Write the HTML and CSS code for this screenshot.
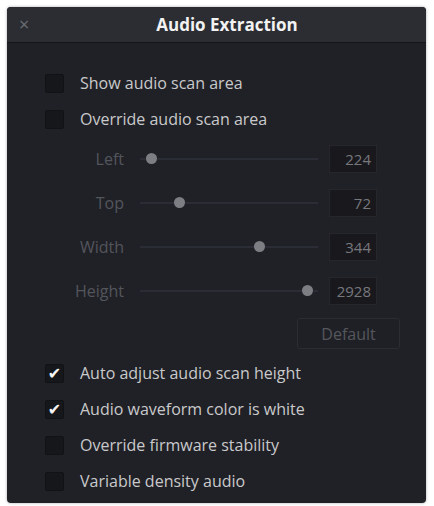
FILE: index.html
```html
<!DOCTYPE html>
<html lang="en">
<head>
    <meta charset="UTF-8">
    <meta name="viewport" content="width=device-width, initial-scale=1.0">
    <title>Audio Extraction</title>
    <link rel="stylesheet" href="styles.css">
</head>
<body>
    <div class="dialog">
        <header class="dialog-header">
            <span class="close-button">&times;</span>
            <h1>Audio Extraction</h1>
        </header>

        <div class="dialog-body">
            <label class="check-row">
                <span class="checkbox"></span>
                <span class="check-label">Show audio scan area</span>
            </label>
            <label class="check-row">
                <span class="checkbox"></span>
                <span class="check-label">Override audio scan area</span>
            </label>

            <div class="slider-row">
                <span class="slider-label">Left</span>
                <div class="slider-track">
                    <span class="slider-knob" style="left: 6%"></span>
                </div>
                <span class="number-box">224</span>
            </div>
            <div class="slider-row">
                <span class="slider-label">Top</span>
                <div class="slider-track">
                    <span class="slider-knob" style="left: 22%"></span>
                </div>
                <span class="number-box">72</span>
            </div>
            <div class="slider-row">
                <span class="slider-label">Width</span>
                <div class="slider-track">
                    <span class="slider-knob" style="left: 67%"></span>
                </div>
                <span class="number-box">344</span>
            </div>
            <div class="slider-row">
                <span class="slider-label">Height</span>
                <div class="slider-track">
                    <span class="slider-knob" style="left: 94%"></span>
                </div>
                <span class="number-box">2928</span>
            </div>

            <div class="button-row">
                <button class="default-button" disabled>Default</button>
            </div>

            <label class="check-row">
                <span class="checkbox checked">&#10004;</span>
                <span class="check-label">Auto adjust audio scan height</span>
            </label>
            <label class="check-row">
                <span class="checkbox checked">&#10004;</span>
                <span class="check-label">Audio waveform color is white</span>
            </label>
            <label class="check-row">
                <span class="checkbox"></span>
                <span class="check-label">Override firmware stability</span>
            </label>
            <label class="check-row">
                <span class="checkbox"></span>
                <span class="check-label">Variable density audio</span>
            </label>
        </div>
    </div>
</body>
</html>
```

FILE: styles.css
```css
* {
    margin: 0;
    padding: 0;
    box-sizing: border-box;
    font-family: "Open Sans", sans-serif;
}

body {
    background-color: #fff;
    padding: 7px 8px 3px 7px;
}

.dialog {
    width: 419px;
    height: 496px;
    background-color: #202126;
    border-radius: 4px;
    overflow: hidden;
    box-shadow: 0 0 3px rgba(0, 0, 0, 0.35);
}

.dialog-header {
    position: relative;
    height: 36px;
    display: flex;
    align-items: center;
    justify-content: center;
    background-color: #2b2d33;
    border-bottom: 1px solid #141519;
}

.dialog-header h1 {
    color: #f2f2f2;
    font-size: 17px;
    font-weight: bold;
    margin-left: 21px;
}

.close-button {
    position: absolute;
    left: 12px;
    top: 7px;
    color: #6c6e74;
    font-size: 18px;
    line-height: 20px;
}

.dialog-body {
    padding: 22px 0 0 38px;
}

.check-row {
    display: flex;
    align-items: center;
    height: 36px;
}

.checkbox {
    width: 19px;
    height: 19px;
    background-color: #16171b;
    border: 1px solid #111215;
    border-radius: 2px;
    margin-right: 16px;
    display: flex;
    align-items: center;
    justify-content: center;
    color: #f4f4f4;
    font-family: "DejaVu Sans", sans-serif;
    font-size: 16px;
}

.check-label {
    color: #c9c9cb;
    font-size: 16px;
}

.slider-row {
    display: flex;
    align-items: center;
    height: 44px;
}

.slider-label {
    width: 79px;
    text-align: right;
    color: #53555c;
    font-size: 16px;
}

.slider-track {
    position: relative;
    width: 178px;
    height: 2px;
    margin-left: 16px;
    background-color: #2a2c36;
}

.slider-knob {
    position: absolute;
    top: -5px;
    width: 11px;
    height: 11px;
    margin-left: -5px;
    border-radius: 50%;
    background-color: #7d7e83;
}

.number-box {
    width: 48px;
    height: 28px;
    margin-left: 11px;
    padding-right: 5px;
    background-color: #19191d;
    border: 1px solid #26272c;
    color: #77787d;
    font-size: 15px;
    line-height: 26px;
    text-align: right;
}

.button-row {
    display: flex;
    padding: 5px 0 6px 252px;
}

.default-button {
    width: 103px;
    height: 31px;
    background-color: #1f2026;
    border: 1px solid #2b2d34;
    border-radius: 3px;
    color: #55575d;
    font-size: 16px;
}
```
